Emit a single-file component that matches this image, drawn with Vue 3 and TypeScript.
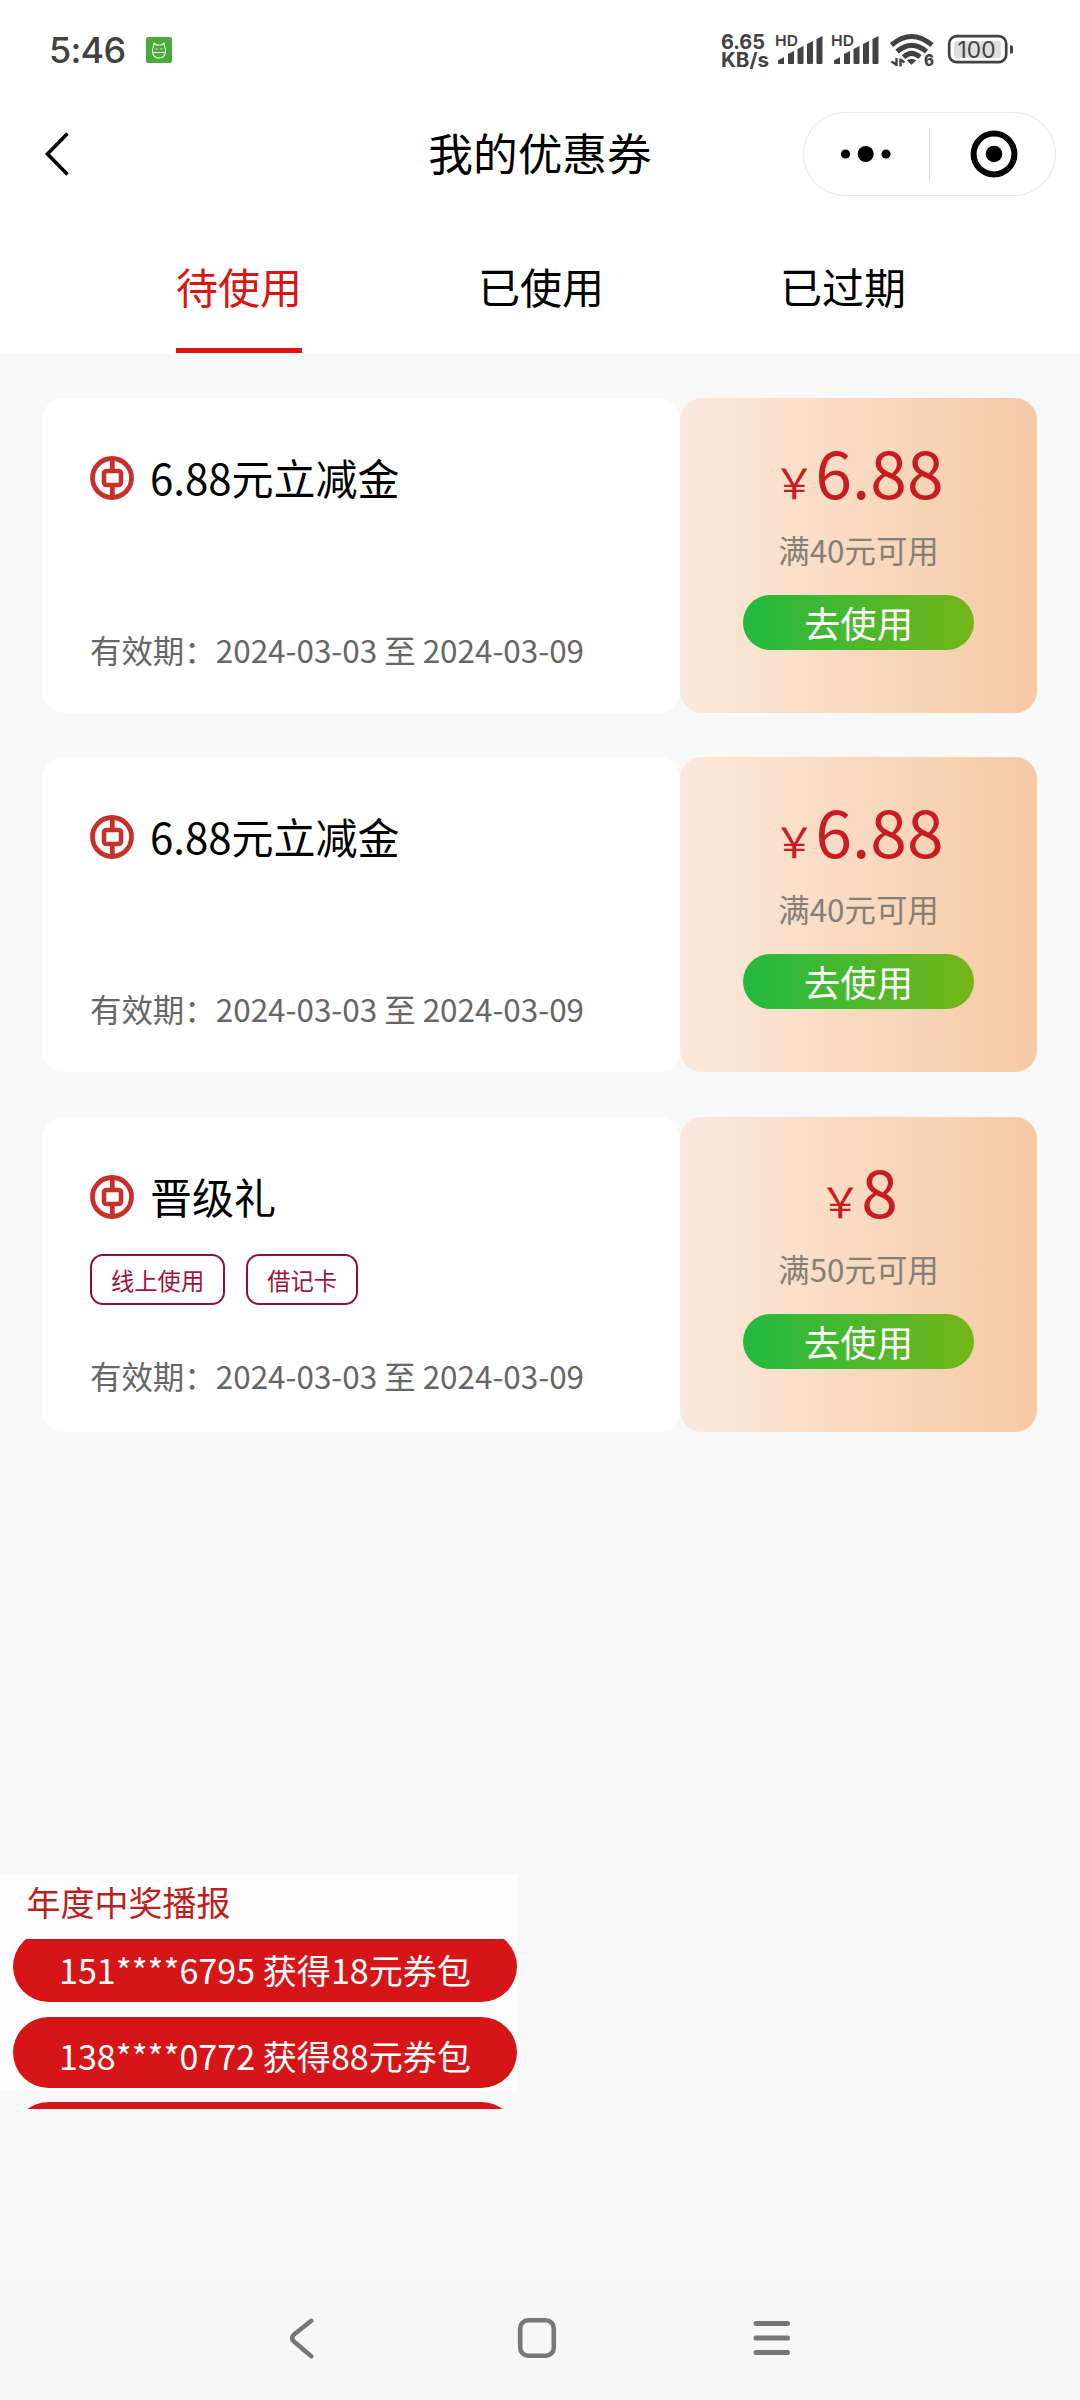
<script setup lang="ts">
import { ref } from 'vue'

interface Coupon {
  id: number
  title: string
  tags: string[]
  start: string
  end: string
  amount: string
  condition: string
}

const tabs: string[] = ['待使用', '已使用', '已过期']
const active = ref<number>(0)

const coupons: Coupon[] = [
  { id: 1, title: '6.88元立减金', tags: [], start: '2024-03-03', end: '2024-03-09', amount: '6.88', condition: '满40元可用' },
  { id: 2, title: '6.88元立减金', tags: [], start: '2024-03-03', end: '2024-03-09', amount: '6.88', condition: '满40元可用' },
  { id: 3, title: '晋级礼', tags: ['线上使用', '借记卡'], start: '2024-03-03', end: '2024-03-09', amount: '8', condition: '满50元可用' },
]

const winners: string[] = ['151****6795 获得18元券包', '138****0772 获得88元券包', '']
</script>

<template>
  <div class="page">
    <header class="top">
      <div class="status">
        <div class="status-left">
          <span class="clock">5:46</span>
          <svg class="app-badge" width="26" height="26" viewBox="0 0 26 26">
            <rect width="26" height="26" rx="2" fill="#4caa3c" />
            <g fill="none" stroke="#e9ffe0" stroke-width="1.1" stroke-linejoin="round">
              <path d="M7.500 9.500 8 6l2.500 2h5L18 6l.5 3.500c.8 1 1.200 2.500 1 5C19.200 19 17 21 13 21s-6.200-2-6.500-6.500c-.2-2.500.2-4 1-5Z" />
              <path d="M6.600 15.500h12.800M9.500 12h2M14.500 12h2" />
            </g>
          </svg>
        </div>
        <svg class="status-right" width="296" height="44" viewBox="720 28 296 44">
          <g fill="#424242">
            <text x="721" y="49.300" font-size="20.500" font-weight="700" textLength="44" lengthAdjust="spacingAndGlyphs">6.65</text>
            <text x="721" y="67.200" font-size="19.500" font-weight="700" textLength="48" lengthAdjust="spacingAndGlyphs">KB/s</text>
            <g v-for="dx in [0, 56]" :key="dx" :transform="`translate(${dx} 0)`">
              <text x="775" y="46" font-size="15" font-weight="600" textLength="23" lengthAdjust="spacingAndGlyphs">HD</text>
              <path d="M778 60.500 784 57v7h-5q-1 0-1-1Z" />
              <path d="M788 54l6-3v12q0 1-1 1h-4q-1 0-1-1Z" />
              <path d="M797.500 49l6-3v17q0 1-1 1h-4q-1 0-1-1Z" />
              <path d="M807 44l6-3v22q0 1-1 1h-4q-1 0-1-1Z" />
              <path d="M816.500 39l6-3v27q0 1-1 1h-4q-1 0-1-1Z" />
            </g>
            <path d="M911.500 64.800l-4.600-4.400q4.600-2.800 9.200 0Z" />
            <text x="924" y="65.500" font-size="16.500" font-weight="800" textLength="10" lengthAdjust="spacingAndGlyphs">6</text>
            <path d="M896.500 58v8M900.500 66.500v-8M891.500 61.500l4.500 3M901 60l3.500 2.500" fill="none" stroke="#424242" stroke-width="2.400" />
          </g>
          <g fill="none" stroke="#424242" stroke-width="5">
            <path d="M891.500 45q20-17 40.500 0" />
            <path d="M897 51.700q14.700-12.500 29.500 0" />
            <path d="M903.500 57.200q8.200-7.500 16.500 0" />
          </g>
          <rect x="949.200" y="36.200" width="57" height="26" rx="7.500" fill="#fff" stroke="#424242" stroke-width="2.700" />
          <rect x="954" y="41" width="47" height="17" rx="3" fill="#dedede" />
          <path d="M1010 45.500h1.500q1.500 0 1.500 1.500v5q0 1.500-1.500 1.500h-1.500Z" fill="#424242" />
          <text x="957.500" y="57.700" font-size="23" font-weight="400" fill="#424242" textLength="38" lengthAdjust="spacingAndGlyphs">100</text>
        </svg>
      </div>

      <div class="navbar">
        <div class="side">
          <svg class="back" width="28" height="48" viewBox="0 0 28 48">
            <path d="M23.500 3.500 3.500 24l20 20.500" fill="none" stroke="#000" stroke-width="3.600" />
          </svg>
        </div>
        <h1 class="title">我的优惠券</h1>
        <div class="side end">
          <div class="capsule">
            <svg width="84" height="50" viewBox="0 0 84 50">
              <circle cx="21.500" cy="25" r="4.600" /><circle cx="41.700" cy="25" r="8" /><circle cx="62" cy="25" r="4.600" />
            </svg>
            <span class="divider"></span>
            <svg width="50" height="50" viewBox="0 0 50 50">
              <circle cx="25" cy="25" r="20.400" fill="none" stroke="#000" stroke-width="6" />
              <circle cx="25" cy="25" r="8.300" />
            </svg>
          </div>
        </div>
      </div>

      <nav class="tabs">
        <div v-for="(tab, i) in tabs" :key="tab" class="tab-cell">
          <span class="tab" :class="{ active: i === active }" @click="active = i">{{ tab }}</span>
        </div>
      </nav>
    </header>

    <main class="list">
      <article v-for="c in coupons" :key="c.id" class="coupon">
        <section class="info">
          <div class="name">
            <svg class="logo" width="44" height="44" viewBox="0 0 44 44">
              <g fill="none" stroke="#c8302c">
                <circle cx="22" cy="22" r="19.500" stroke-width="4.800" />
                <rect x="14" y="15" width="17" height="14" rx="2.500" stroke-width="4.600" />
                <path d="M22.300 3v11M22.300 30v11" stroke-width="4.800" />
              </g>
            </svg>
            <span class="name-text">{{ c.title }}</span>
          </div>
          <div v-if="c.tags.length" class="tags">
            <span v-for="t in c.tags" :key="t" class="tag">{{ t }}</span>
          </div>
          <div class="date" :class="{ tagged: c.tags.length }">有效期：{{ c.start }} 至 {{ c.end }}</div>
        </section>
        <section class="value">
          <div class="price"><span class="yen">￥</span><span class="amount">{{ c.amount }}</span></div>
          <div class="condition">{{ c.condition }}</div>
          <button class="use" type="button">去使用</button>
        </section>
      </article>
    </main>

    <aside class="broadcast">
      <div class="b-title">年度中奖播报</div>
      <div class="b-view">
        <div class="b-track">
          <div v-for="(w, i) in winners" :key="i" class="pill">{{ w }}</div>
        </div>
      </div>
    </aside>

    <footer class="sysbar">
      <svg width="30" height="48" viewBox="0 0 30 48">
        <path d="M24.300 6.800 7 20.500q-3.500 3.500 0 7l17.300 14.700" fill="none" stroke="#777" stroke-width="4.500" stroke-linecap="round" />
      </svg>
      <svg class="home" width="44" height="48" viewBox="0 0 44 48">
        <rect x="5.200" y="6.200" width="33.600" height="35.600" rx="8" fill="none" stroke="#777" stroke-width="4.600" />
      </svg>
      <svg width="42" height="48" viewBox="0 0 42 48">
        <path d="M5 9.500h31.500M5 24h31.500M5 38.500h31.500" stroke="#777" stroke-width="5" stroke-linecap="round" />
      </svg>
    </footer>
  </div>
</template>

<style>
body {
  margin: 0;
  background: #f8f8f8;
}
</style>

<style scoped>
.page {
  width: 1080px;
  height: 2400px;
  display: flex;
  flex-direction: column;
  overflow: hidden;
  background: #f8f8f8;
  font-family: "Noto Sans CJK SC", "Noto Sans", sans-serif;
  color: #000;
}
svg {
  display: block;
  flex: none;
}
.top {
  height: 353px;
  background: #fff;
}
.status {
  height: 100px;
  box-sizing: border-box;
  padding: 28px 64px 0 49px;
  display: flex;
  justify-content: space-between;
  align-items: flex-start;
}
.status text {
  font-family: Inter, sans-serif;
}
.status-left {
  display: flex;
}
.clock {
  width: 97px;
  font-family: Inter, sans-serif;
  font-size: 36px;
  font-weight: 500;
  line-height: 44px;
  letter-spacing: -0.800px;
  color: #424242;
}
.app-badge {
  margin-top: 9px;
}
.navbar {
  height: 108px;
  display: grid;
  grid-template-columns: 1fr auto 1fr;
  align-items: center;
}
.side {
  display: flex;
  padding-left: 44px;
}
.end {
  justify-content: flex-end;
  padding: 0 24px 0 0;
}
.title {
  margin: 0;
  font-size: 44.700px;
  line-height: 103px;
  font-weight: 400;
  padding-bottom: 5px;
}
.capsule {
  width: 253px;
  height: 84px;
  flex: none;
  box-sizing: border-box;
  border: 1.500px solid #e8e8e8;
  border-radius: 42px;
  display: flex;
  align-items: center;
  padding-left: 20px;
}
.divider {
  width: 1px;
  height: 52px;
  margin: 0 39px 0 21px;
  background: #dcdcdc;
}
.tabs {
  display: flex;
  height: 145px;
  padding: 0 86px 0 88px;
}
.tab-cell {
  flex: 1;
  display: flex;
  justify-content: center;
}
.tab {
  font-size: 42px;
  line-height: 156px;
  height: 145px;
  box-sizing: border-box;
  border-bottom: 5px solid transparent;
}
.tab.active {
  color: #db1414;
  border-bottom-color: #db1414;
}
.list {
  padding: 45px 43px 0 42px;
  display: flex;
  flex-direction: column;
  gap: 44.400px;
}
.coupon {
  display: flex;
  height: 315px;
}
.info {
  width: 638px;
  box-sizing: border-box;
  padding: 58px 48px 0;
  background: #fff;
  border-radius: 22px;
}
.name {
  display: flex;
  gap: 16px;
  height: 44px;
}
.name-text {
  font-size: 42px;
  line-height: 42px;
}
.tags {
  display: flex;
  gap: 21px;
  margin-top: 35px;
}
.tag {
  box-sizing: border-box;
  height: 51px;
  line-height: 48px;
  padding: 0 19px;
  border: 2px solid #8c1237;
  border-radius: 13px;
  color: #a01240;
  font-size: 23.300px;
}
.date {
  margin-top: 128px;
  font-size: 31.450px;
  line-height: 44px;
  color: #666;
  white-space: nowrap;
}
.date.tagged {
  margin-top: 49px;
}
.value {
  width: 357px;
  box-sizing: border-box;
  padding-top: 39px;
  display: flex;
  flex-direction: column;
  align-items: center;
  border-radius: 22px;
  background: linear-gradient(90deg, #fce9db, #f5caa5);
}
.price {
  display: flex;
  align-items: baseline;
  color: #c71c22;
  height: 66px;
}
.yen {
  font-size: 42px;
  line-height: 42px;
}
.amount {
  font-size: 66px;
  line-height: 66px;
}
.condition {
  margin-top: 25px;
  font-size: 31.400px;
  line-height: 44px;
  color: #858078;
}
.use {
  margin-top: 23px;
  width: 231px;
  height: 55px;
  padding: 0;
  border: 0;
  border-radius: 28px;
  background: linear-gradient(90deg, #22ba40, #74b618);
  color: #fff;
  font-family: inherit;
  font-size: 36.400px;
  line-height: 55px;
}
.broadcast {
  width: 517px;
  height: 217px;
  margin-top: 442.400px;
  background: #fdfdfd;
  flex: none;
}
.b-title {
  height: 65px;
  box-sizing: border-box;
  padding-left: 26.500px;
  font-size: 34px;
  line-height: 55px;
  color: #bb1f20;
}
.b-view {
  height: 170px;
  padding-left: 13px;
  overflow: hidden;
}
.b-track {
  display: flex;
  flex-direction: column;
  gap: 14.500px;
  margin-top: -8px;
}
.pill {
  height: 71px;
  flex: none;
  border-radius: 36px;
  background: #d61518;
  color: #fff;
  font-size: 34.100px;
  line-height: 77px;
  text-align: center;
  white-space: pre;
}
.sysbar {
  margin-top: auto;
  height: 121px;
  box-sizing: border-box;
  padding: 35px 287px 0 287px;
  display: flex;
  justify-content: space-between;
  align-items: flex-start;
  background: #f7f7f7;
}
.home {
  margin-left: 5px;
}
</style>
